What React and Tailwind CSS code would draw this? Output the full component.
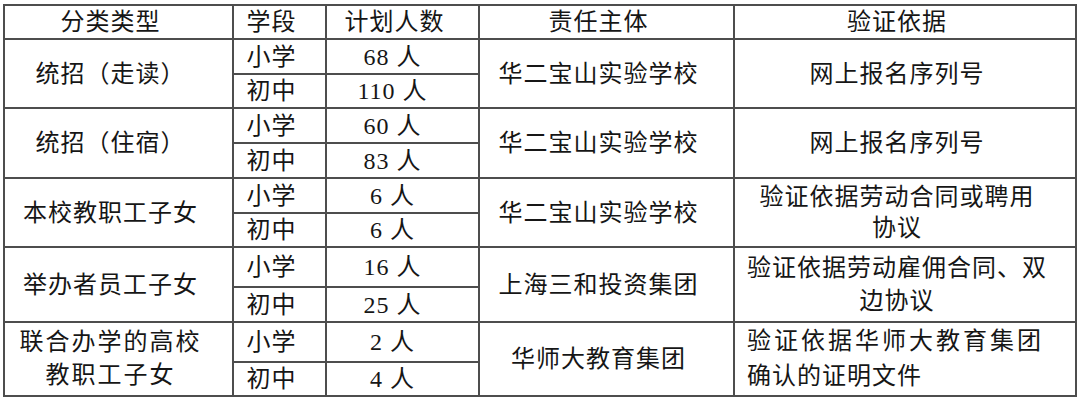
import React from "react";

const groups = [
  {
    cat: ["统招（走读）"],
    rows: [["小学", "68 人"], ["初中", "110 人"]],
    h: ["h-[35px]", "h-[34px]"],
    org: "华二宝山实验学校",
    basis: { type: "center", lines: ["网上报名序列号"] },
  },
  {
    cat: ["统招（住宿）"],
    rows: [["小学", "60 人"], ["初中", "83 人"]],
    h: ["h-[35px]", "h-[35px]"],
    org: "华二宝山实验学校",
    basis: { type: "center", lines: ["网上报名序列号"] },
  },
  {
    cat: ["本校教职工子女"],
    rows: [["小学", "6 人"], ["初中", "6 人"]],
    h: ["h-[35px]", "h-[34px]"],
    org: "华二宝山实验学校",
    basis: { type: "center2", lines: ["验证依据劳动合同或聘用", "协议"] },
  },
  {
    cat: ["举办者员工子女"],
    rows: [["小学", "16 人"], ["初中", "25 人"]],
    h: ["h-[40px]", "h-[35px]"],
    org: "上海三和投资集团",
    basis: { type: "center3", lines: ["验证依据劳动雇佣合同、双", "边协议"] },
  },
  {
    cat: ["联合办学的高校", "教职工子女"],
    rows: [["小学", "2 人"], ["初中", "4 人"]],
    h: ["h-[40px]", "h-[34px]"],
    org: "华师大教育集团",
    basis: { type: "left", lines: ["验证依据华师大教育集团", "确认的证明文件"] },
  },
];

const bd = "border-2 border-[#4d4d4d]";

function Basis({ b }) {
  if (b.type === "center") return <span>{b.lines[0]}</span>;
  if (b.type === "left")
    return (
      <div className="text-left pl-[12px] leading-[35px]">
        <div className="tracking-[3px]">{b.lines[0]}</div>
        <div className="tracking-[1px]">{b.lines[1]}</div>
      </div>
    );
  return (
    <div className={b.type === "center2" ? "leading-[31px]" : "leading-[33px]"}>
      <div>{b.lines[0]}</div>
      <div>{b.lines[1]}</div>
    </div>
  );
}

export default function App() {
  return (
    <div className="w-[1080px] h-[401px] bg-white pt-[4px] pl-[3px]">
      <table
        className="table-fixed border-collapse text-[24px] tracking-[1px] text-[#161616] text-center"
        style={{ fontFamily: '"Liberation Serif", "Noto Sans CJK SC", serif', width: 1074 }}
      >
        <colgroup>
          <col style={{ width: 229 }} />
          <col style={{ width: 93 }} />
          <col style={{ width: 153 }} />
          <col style={{ width: 255 }} />
          <col style={{ width: 342 }} />
        </colgroup>
        <tbody>
          <tr className="h-[34px] leading-none">
            <td className={`${bd} pr-[16px]`}>分类类型</td>
            <td className={`${bd} pr-[16px]`}>学段</td>
            <td className={`${bd} pr-[16px]`}>计划人数</td>
            <td className={`${bd} pr-[16px]`}>责任主体</td>
            <td className={`${bd} pr-[16px]`}>验证依据</td>
          </tr>
          {groups.map((g, gi) => (
            <React.Fragment key={gi}>
              <tr className={`${g.h[0]} leading-none`}>
                <td rowSpan={2} className={`${bd} pr-[16px]`}>
                  {g.cat.length === 1 ? (
                    <span>{g.cat[0]}</span>
                  ) : (
                    <div className="leading-[33px] tracking-[2px]">
                      <div>{g.cat[0]}</div>
                      <div>{g.cat[1]}</div>
                    </div>
                  )}
                </td>
                <td className={`${bd} pr-[16px]`}>{g.rows[0][0]}</td>
                <td className={`${bd} pr-[20px]`}>{g.rows[0][1]}</td>
                <td rowSpan={2} className={`${bd} pr-[16px]`}>{g.org}</td>
                <td rowSpan={2} className={`${bd} ${g.basis.type === "left" ? "" : "pr-[16px]"}`}>
                  <Basis b={g.basis} />
                </td>
              </tr>
              <tr className={`${g.h[1]} leading-none`}>
                <td className={`${bd} pr-[16px]`}>{g.rows[1][0]}</td>
                <td className={`${bd} pr-[20px]`}>{g.rows[1][1]}</td>
              </tr>
            </React.Fragment>
          ))}
        </tbody>
      </table>
    </div>
  );
}
